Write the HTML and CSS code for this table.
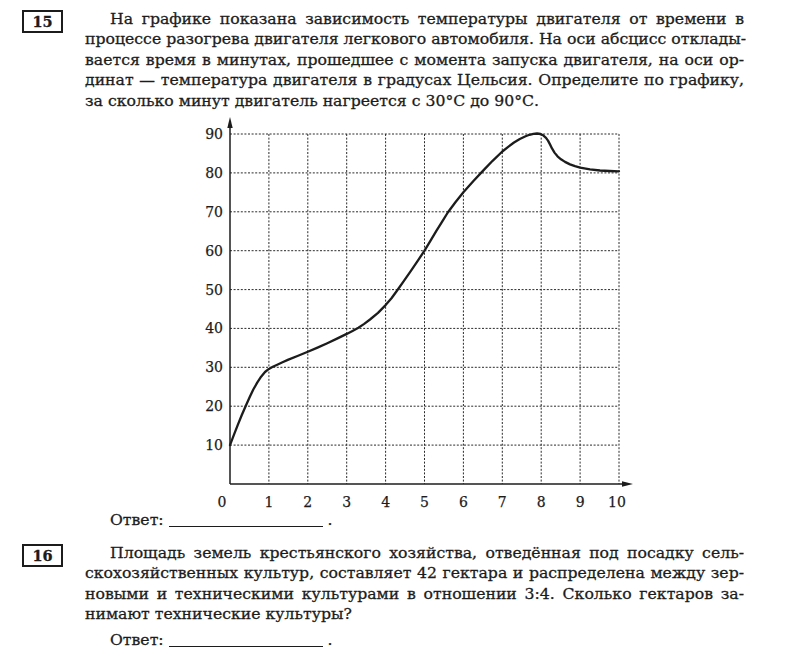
FILE: index.html
```html
<!DOCTYPE html>
<html lang="ru">
<head>
<meta charset="utf-8">
<title>Задания 15–16</title>
<link rel="stylesheet" href="styles.css">
</head>
<body>
<div class="page">
  <section class="task task-15">
    <div class="num">15</div>
    <div class="body">
      <div class="para">
        <div class="ln first">На графике показана зависимость температуры двигателя от времени в</div>
        <div class="ln">процессе разогрева двигателя легкового автомобиля. На оси абсцисс отклады-</div>
        <div class="ln">вается время в минутах, прошедшее с момента запуска двигателя, на оси ор-</div>
        <div class="ln">динат — температура двигателя в градусах Цельсия. Определите по графику,</div>
        <div class="ln last">за сколько минут двигатель нагреется с 30°С до 90°С.</div>
      </div>
      <svg class="chart" viewBox="190 112 460 398" width="460" height="398" xmlns="http://www.w3.org/2000/svg">
        <g class="grid">
          <line x1="230" y1="445.1" x2="619" y2="445.1"/>
          <line x1="230" y1="406.2" x2="619" y2="406.2"/>
          <line x1="230" y1="367.3" x2="619" y2="367.3"/>
          <line x1="230" y1="328.4" x2="619" y2="328.4"/>
          <line x1="230" y1="289.6" x2="619" y2="289.6"/>
          <line x1="230" y1="250.7" x2="619" y2="250.7"/>
          <line x1="230" y1="211.8" x2="619" y2="211.8"/>
          <line x1="230" y1="172.9" x2="619" y2="172.9"/>
          <line x1="230" y1="134" x2="619" y2="134"/>
          <line x1="268.9" y1="134" x2="268.9" y2="484"/>
          <line x1="307.8" y1="134" x2="307.8" y2="484"/>
          <line x1="346.7" y1="134" x2="346.7" y2="484"/>
          <line x1="385.6" y1="134" x2="385.6" y2="484"/>
          <line x1="424.5" y1="134" x2="424.5" y2="484"/>
          <line x1="463.4" y1="134" x2="463.4" y2="484"/>
          <line x1="502.3" y1="134" x2="502.3" y2="484"/>
          <line x1="541.2" y1="134" x2="541.2" y2="484"/>
          <line x1="580.1" y1="134" x2="580.1" y2="484"/>
          <line x1="619" y1="134" x2="619" y2="484"/>
        </g>
        <g class="axes">
          <line x1="230" y1="484" x2="230" y2="124"/>
          <line x1="230" y1="484" x2="625" y2="484"/>
        </g>
        <polygon class="arrow" points="230,117 227.3,128 232.7,128"/>
        <polygon class="arrow" points="633,484 622,481.3 622,486.7"/>
        <polyline class="curve" points="230,445.1 233.9,434.8 237.8,424.9 241.7,415.3 245.6,406.2 249.5,397.5 253.3,389.5 257.2,382.6 261.1,376.7 265,372 268.9,368.9 272.8,366.8 276.7,365 282.5,362.3 288.4,359.6 298.1,355.7 307.8,351.8 317.5,347.6 327.3,343.2 337,338.6 346.7,333.9 352.5,330.9 358.4,327.7 364.2,323.9 370,319.5 378,312.9 385.6,305.1 391.5,298.2 397.3,290.3 404.1,280.6 410.9,270.9 417.7,260.8 424.5,250.7 430.4,240.8 436.2,231.2 442,221.8 447.8,212.5 455.6,202 463.4,192.3 473.2,181.3 482.9,170.9 492.6,160.8 502.3,151.5 508.2,146.8 514,142.5 519.8,139 525.6,136.3 529.5,134.8 533.4,133.8 537,133.5 540.5,134 543.5,135.6 546,137.8 548,140.6 550,144.4 552,148.4 554.5,152.6 557.5,156.3 561,159.3 565,161.9 570,164.4 575,166.2 580.1,167.6 590,169.4 600,170.5 609.5,171 619,171.3"/>
        <g class="ylabels">
          <text x="223" y="450.1">10</text>
          <text x="223" y="411.2">20</text>
          <text x="223" y="372.3">30</text>
          <text x="223" y="333.4">40</text>
          <text x="223" y="294.6">50</text>
          <text x="223" y="255.7">60</text>
          <text x="223" y="216.8">70</text>
          <text x="223" y="177.9">80</text>
          <text x="223" y="139">90</text>
        </g>
        <g class="xlabels">
          <text x="222" y="507">0</text>
          <text x="268.9" y="507">1</text>
          <text x="307.8" y="507">2</text>
          <text x="346.7" y="507">3</text>
          <text x="385.6" y="507">4</text>
          <text x="424.5" y="507">5</text>
          <text x="463.4" y="507">6</text>
          <text x="502.3" y="507">7</text>
          <text x="541.2" y="507">8</text>
          <text x="580.1" y="507">9</text>
          <text x="617" y="507">10</text>
        </g>
      </svg>
      <div class="answer">Ответ: <span class="blank"></span> .</div>
    </div>
  </section>

  <section class="task task-16">
    <div class="num">16</div>
    <div class="body">
      <div class="para">
        <div class="ln first">Площадь земель крестьянского хозяйства, отведённая под посадку сель-</div>
        <div class="ln">скохозяйственных культур, составляет 42 гектара и распределена между зер-</div>
        <div class="ln">новыми и техническими культурами в отношении 3:4. Сколько гектаров за-</div>
        <div class="ln last">нимают технические культуры?</div>
      </div>
      <div class="answer answer-16">Ответ: <span class="blank"></span> .</div>
    </div>
  </section>
</div>
</body>
</html>
```

FILE: styles.css
```css
html, body {
  margin: 0;
  padding: 0;
  background: #ffffff;
}

.page {
  width: 797px;
  padding-top: 9px;
  color: #1c1c1c;
  font-family: "DejaVu Serif", "Liberation Serif", serif;
  font-size: 15.7px;
  line-height: 20.4px;
  -webkit-text-stroke: 0.3px #1c1c1c;
}

.task {
  display: grid;
  grid-template-columns: 85px 659px;
  align-items: start;
}

.task-16 {
  margin-top: 12.5px;
}

.num {
  margin-left: 22px;
  margin-top: 1px;
  width: 41px;
  height: 23px;
  box-sizing: border-box;
  border: 2px solid #1c1c1c;
  font-weight: bold;
  font-size: 14.5px;
  line-height: 19px;
  text-align: center;
}

.ln {
  text-align: justify;
  text-align-last: justify;
  white-space: nowrap;
}

.ln.first {
  padding-left: 25px;
}

.ln.last {
  text-align-last: left;
}

.chart {
  display: block;
  margin-left: 105px;
  margin-top: 1px;
}

.chart .grid line {
  stroke: #2a2a2a;
  stroke-width: 1;
  stroke-dasharray: 2 1.6;
}

.chart .axes line {
  stroke: #1c1c1c;
  stroke-width: 1.5;
}

.chart .arrow {
  fill: #1c1c1c;
}

.chart .curve {
  fill: none;
  stroke: #1c1c1c;
  stroke-width: 2.3;
  stroke-linejoin: round;
  stroke-linecap: round;
}

.chart text {
  font-family: "DejaVu Serif", "Liberation Serif", serif;
  font-size: 14px;
  fill: #1c1c1c;
  stroke: #1c1c1c;
  stroke-width: 0.25;
}

.chart .ylabels text {
  text-anchor: end;
}

.chart .xlabels text {
  text-anchor: middle;
}

.answer {
  padding-left: 25px;
}

.answer-16 {
  margin-top: 5.4px;
}

.blank {
  display: inline-block;
  width: 154px;
  border-bottom: 1.5px solid #1c1c1c;
  vertical-align: -2px;
}
```
